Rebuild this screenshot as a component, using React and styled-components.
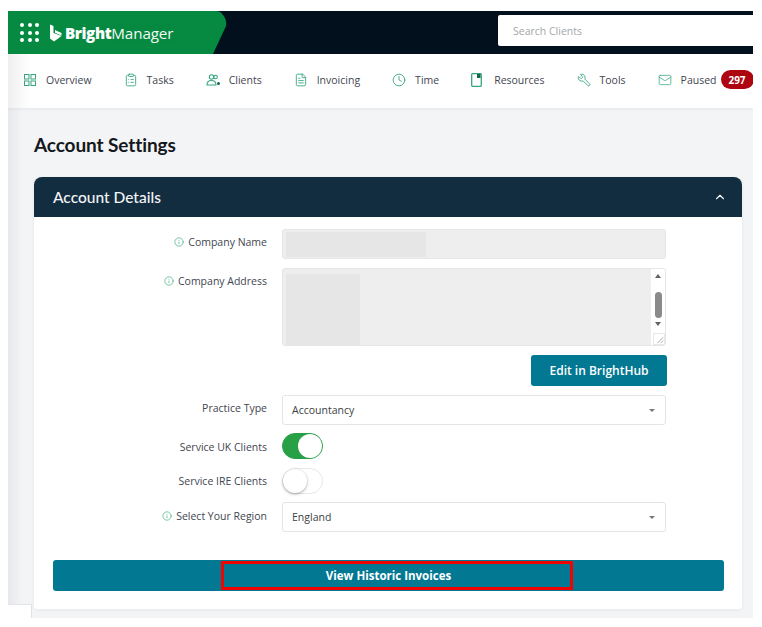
import React from "react";
import styled, { createGlobalStyle } from "styled-components";
import { ClipboardList, FileText, Clock, Wrench, Mail, Info, ChevronUp } from "lucide-react";

const Global = createGlobalStyle`
  html, body { margin: 0; padding: 0; background: #fff; }
  body { font-family: "Open Sans", "Noto Sans", sans-serif; color: #3f4650; }
  * { box-sizing: border-box; }
`;

const Frame = styled.div`
  width: 745px;
  margin: 11px 0 0 8px;
  position: relative;
  overflow: hidden;
`;

const TopBar = styled.header`
  height: 43px;
  background: #01101c;
  display: flex;
  justify-content: space-between;
  align-items: flex-start;
`;

const Brand = styled.div`
  width: 219px;
  height: 43px;
  background: #068a42;
  clip-path: path("M0 0H208C214 0 219.500 8 218 15L205 43H0Z");
  display: flex;
  align-items: center;
  padding-left: 12px;
  color: #fff;
  font-size: 15.200px;
`;

const Dots = styled.div`
  display: grid;
  grid-template-columns: repeat(3, 4px);
  grid-auto-rows: 4px;
  gap: 3.500px;
  margin-right: 11px;
  span { background: #fff; border-radius: 50%; }
`;

const BrandMark = styled.svg`
  width: 12px;
  height: 18px;
  margin-right: 3px;
`;

const BrandBold = styled.span`
  font-weight: 800;
  letter-spacing: -0.4px;
`;

const BrandLight = styled.span`
  font-weight: 400;
  letter-spacing: -0.1px;
  opacity: 0.95;
`;

const Search = styled.div`
  width: 255px;
  height: 31px;
  margin-top: 4px;
  background: #fff;
  border-radius: 2px 0 0 2px;
  display: flex;
  align-items: center;
  padding-left: 15px;
  font-size: 10.500px;
  color: #a3a7ab;
`;

const Nav = styled.nav`
  height: 54px;
  display: flex;
  align-items: center;
  gap: 32px;
  padding: 0 0 3px 16px;
  background: linear-gradient(90deg, #efefef 0, #fff 22px);
  box-shadow: 0 2px 3px rgba(0,0,0,.04);
  position: relative;
`;

const NavItem = styled.div`
  display: flex;
  align-items: center;
  gap: ${p => p.$gap ?? 10}px;
  font-size: 10.500px;
  color: #3f4650;
  white-space: nowrap;
  svg { flex: none; color: #38a67d; }
`;

const FlippedWrench = styled(Wrench)`
  transform: scaleX(-1);
`;

const Badge = styled.span`
  background: #ad0610;
  color: #fff;
  font-size: 10px;
  font-weight: 700;
  border-radius: 10px;
  height: 19px;
  width: 33px;
  margin-left: -5px;
  display: flex;
  align-items: center;
  justify-content: center;
`;

const Content = styled.main`
  background: linear-gradient(90deg, #e6e8ec 0, #f3f4f6 14px);
  padding: 24px 11px 9px 26px;
`;

const Title = styled.h1`
  margin: 0 0 20px;
  font-family: Lato, sans-serif;
  font-size: 19px;
  line-height: 25px;
  font-weight: 700;
  color: #14181c;
  letter-spacing: -0.1px;
`;

const Card = styled.section`
  background: #fff;
  border-radius: 8px 8px 3px 3px;
  box-shadow: 0 1px 4px rgba(30,40,60,.06);
  height: 432px;
`;

const CardHead = styled.div`
  height: 40px;
  background: #122c40;
  border-radius: 8px 8px 0 0;
  display: flex;
  align-items: center;
  justify-content: space-between;
  padding: 0 15px 0 19px;
  color: #f2f4f5;
  font-family: Lato, sans-serif;
  font-size: 15.500px;
  font-weight: 500;
`;

const Form = styled.div`
  padding: 12px 76px 0 0;
  display: grid;
  grid-template-columns: 233px 384px;
  column-gap: 15px;
  align-items: start;
`;

const Label = styled.label`
  display: flex;
  justify-content: flex-end;
  align-items: center;
  gap: 4px;
  font-size: 10.500px;
  color: #3f4650;
  height: ${p => p.$h ?? 26}px;
  svg { color: #5cbb92; flex: none; }
`;

const ReadOnly = styled.div`
  height: ${p => p.$h}px;
  margin-bottom: ${p => p.$mb}px;
  background: #eee;
  border: 1px solid #e5e6ea;
  border-radius: 3px;
  display: flex;
  align-items: ${p => p.$h > 40 ? "flex-start" : "stretch"};
  overflow: hidden;
  position: relative;
`;

const Redacted = styled.div`
  width: ${p => p.$w}px;
  height: ${p => p.$h}px;
  background: #e6e6e6;
  margin: ${p => p.$top}px 0 0 3px;
`;

const ScrollTrack = styled.div`
  margin-left: auto;
  width: 14px;
  height: 100%;
  background: #fff;
  position: relative;
  display: flex;
  flex-direction: column;
  align-items: center;
`;

const ArrowUp = styled.span`
  margin-top: 5px;
  border: 3.500px solid transparent;
  border-top: 0;
  border-bottom: 4px solid #5f6368;
`;

const Thumb = styled.span`
  width: 7px;
  height: 26px;
  margin-top: 14px;
  background: #8a8a8a;
  border-radius: 4px;
`;

const ArrowDown = styled.span`
  margin-top: 4px;
  border: 3.500px solid transparent;
  border-bottom: 0;
  border-top: 4px solid #5f6368;
`;

const Grip = styled.svg`
  position: absolute;
  right: 0;
  bottom: 0;
  width: 12px;
  height: 12px;
  background: #fff;
  border: 1px solid #e8e8e8;
`;

const EditRow = styled.div`
  grid-column: 2;
  display: flex;
  justify-content: flex-end;
  margin-bottom: 9px;
`;

const TealButton = styled.button`
  border: 0;
  background: #027893;
  color: #fff;
  font-family: "Open Sans", sans-serif;
  font-weight: 600;
  border-radius: 3px;
  height: 31px;
`;

const EditButton = styled(TealButton)`
  width: 136px;
  margin-right: -1px;
  font-size: 12px;
`;

const Select = styled.div`
  height: 30px;
  margin-bottom: ${p => p.$mb}px;
  background: #fff;
  border: 1px solid #e3e4e8;
  border-radius: 3px;
  display: flex;
  align-items: center;
  justify-content: space-between;
  padding: 0 10px 0 9px;
  font-size: 10.500px;
  color: #3a3f45;
  &::after {
    content: "";
    border: 3px solid transparent;
    border-bottom: 0;
    border-top: 3px solid #777;
  }
`;

const Toggle = styled.div`
  width: 41px;
  height: 26px;
  margin-bottom: ${p => p.$mb}px;
  border-radius: 13px;
  background: ${p => p.$on ? "#28a046" : "#fff"};
  border: 1px solid ${p => p.$on ? "#28a046" : "#e8e8e8"};
  display: flex;
  justify-content: ${p => p.$on ? "flex-end" : "flex-start"};
  &::before {
    content: "";
    width: 24px;
    height: 24px;
    border-radius: 50%;
    background: #fff;
    box-shadow: ${p => p.$on ? "none" : "0 1px 3px rgba(0,0,0,.35)"};
  }
`;

const Wide = styled.div`
  padding: 28px 19px 0;
`;

const WideButton = styled(TealButton)`
  width: 671px;
  display: block;
  font-size: 11.500px;
  font-weight: 700;
  position: relative;
`;

const Highlight = styled.span`
  position: absolute;
  left: 168px;
  top: 1px;
  width: 352px;
  height: 29px;
  border: 3px solid #f00401;
`;

const CornerNotch = styled.div`
  position: absolute;
  left: 0;
  bottom: 0;
  width: 24px;
  height: 14px;
  background: #fff;
  border-right: 1px solid #dfe2e8;
  border-top: 1px solid #e3e5ea;
`;

const OverviewIcon = () => (
  <svg width="12" height="12" viewBox="0 0 12 12" fill="none" stroke="currentColor" strokeWidth="1">
    <rect x=".5" y=".5" width="4.500" height="4.500" />
    <rect x="7" y=".5" width="4.500" height="4.500" />
    <rect x=".5" y="7" width="4.500" height="4.500" />
    <rect x="7" y="7" width="4.500" height="4.500" />
  </svg>
);

const ClientsIcon = () => (
  <svg width="15" height="12" viewBox="0 0 15 12" fill="none" stroke="currentColor" strokeWidth="1.100">
    <circle cx="5.500" cy="3" r="2.200" />
    <circle cx="9.500" cy="3" r="1.800" />
    <path d="M1 11c0-3 2-4.500 4.500-4.500S10 8 10 11H1Z" />
    <circle cx="12.500" cy="9.500" r="1.500" fill="#14664a" stroke="none" />
  </svg>
);

const ResourcesIcon = () => (
  <svg width="11" height="14" viewBox="0 0 11 14" fill="none">
    <rect x=".7" y=".7" width="9.600" height="12.600" rx=".8" stroke="currentColor" strokeWidth="1.300" />
    <rect x="6" y="1" width="3.500" height="4" fill="#14664a" />
  </svg>
);

const Row = ({ info, label, h, children }) => (
  <>
    <Label $h={h}>{info && <Info size={10} strokeWidth={2} />}{label}</Label>
    {children}
  </>
);

export default function App() {
  return (
    <>
      <Global />
      <Frame>
        <TopBar>
          <Brand>
            <Dots>{Array.from({ length: 9 }).map((_, i) => <span key={i} />)}</Dots>
            <BrandMark viewBox="0 0 12 18" aria-hidden="true">
              <path fill="#fff" d="M0 0.500 L3.500 2 V9 L11.500 12 L4 17.500 L0 14.500 Z M5 6 L11.500 9 V11.500 L5 8.800 Z" />
            </BrandMark>
            <BrandBold>Bright</BrandBold>
            <BrandLight>Manager</BrandLight>
          </Brand>
          <Search>Search Clients</Search>
        </TopBar>
        <Nav>
          <NavItem><OverviewIcon />Overview</NavItem>
          <NavItem $gap={9}><ClipboardList size={14} strokeWidth={1.500} />Tasks</NavItem>
          <NavItem $gap={8}><ClientsIcon />Clients</NavItem>
          <NavItem $gap={9}><FileText size={14} strokeWidth={1.500} />Invoicing</NavItem>
          <NavItem $gap={9}><Clock size={14} strokeWidth={1.500} />Time</NavItem>
          <NavItem $gap={12}><ResourcesIcon />Resources</NavItem>
          <NavItem $gap={9}><FlippedWrench size={14} strokeWidth={1.500} />Tools</NavItem>
          <NavItem $gap={9}><Mail size={14} strokeWidth={1.300} />Paused<Badge>297</Badge></NavItem>
        </Nav>
        <Content>
          <Title>Account Settings</Title>
          <Card>
            <CardHead>Account Details<ChevronUp size={14} strokeWidth={2} /></CardHead>
            <Form>
              <Row info label="Company Name">
                <ReadOnly $h={30} $mb={9}><Redacted $w={140} $h={25} $top={2} /></ReadOnly>
              </Row>
              <Row info label="Company Address">
                <ReadOnly $h={78} $mb={9}>
                  <Redacted $w={74} $h={72} $top={5} />
                  <ScrollTrack>
                    <ArrowUp />
                    <Thumb />
                    <ArrowDown />
                    <Grip viewBox="0 0 12 12"><path d="M4 11 11 4M8 11l3-3" stroke="#888" strokeWidth=".8" /></Grip>
                  </ScrollTrack>
                </ReadOnly>
              </Row>
              <EditRow><EditButton>Edit in BrightHub</EditButton></EditRow>
              <Row label="Practice Type"><Select $mb={8}>Accountancy</Select></Row>
              <Row label="Service UK Clients" h={28}><Toggle $on $mb={9} /></Row>
              <Row label="Service IRE Clients"><Toggle $mb={8} /></Row>
              <Row info label="Select Your Region" h={28}><Select $mb={0}>England</Select></Row>
            </Form>
            <Wide>
              <WideButton>View Historic Invoices<Highlight /></WideButton>
            </Wide>
          </Card>
        </Content>
        <CornerNotch />
      </Frame>
    </>
  );
}
